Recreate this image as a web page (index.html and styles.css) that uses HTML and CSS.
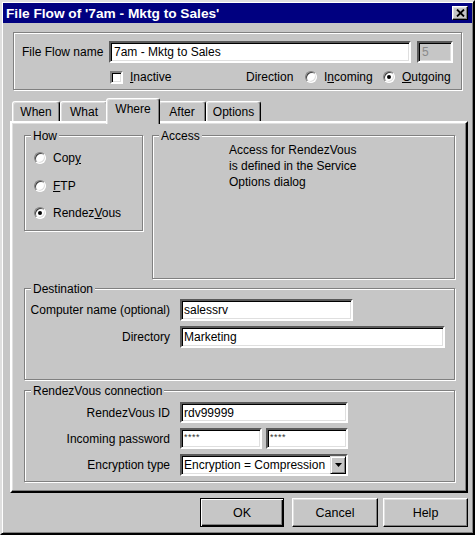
FILE: index.html
```html
<!DOCTYPE html>
<html>
<head>
<meta charset="utf-8">
<title>File Flow</title>
<link rel="stylesheet" href="styles.css">
</head>
<body>
<div class="window">
  <div class="titlebar">
    <span class="title">File Flow of '7am - Mktg to Sales'</span>
    <span class="close-btn"><svg width="9" height="8" viewBox="0 0 9 8"><path d="M1 0.5 L8 7.5 M8 0.5 L1 7.5" stroke="#000" stroke-width="1.8" fill="none"/></svg></span>
  </div>
  <div class="client">
    <div class="group top-group">
      <div class="row1">
        <span class="lbl-name">File Flow name</span>
        <div class="field name-field">7am - Mktg to Sales</div>
        <div class="field num-field">5</div>
      </div>
      <div class="row2">
        <div class="chk-wrap"><span class="checkbox"></span><span class="chk-label"><u>I</u>nactive</span></div>
        <span class="dir-label">Direction</span>
        <span class="radio"></span><span class="radio-text w-in">I<u>n</u>coming</span>
        <span class="radio checked"></span><span class="radio-text"><u>O</u>utgoing</span>
      </div>
    </div>

    <div class="tabs">
      <div class="tab t-when">When</div>
      <div class="tab t-what">What</div>
      <div class="tab t-where active">Where</div>
      <div class="tab t-after">After</div>
      <div class="tab t-options">Options</div>
    </div>

    <div class="panel">
      <div class="top-row">
        <div class="group how">
          <span class="caption">How</span>
          <div class="opt"><span class="radio"></span><span class="radio-text">Cop<u>y</u></span></div>
          <div class="opt"><span class="radio"></span><span class="radio-text"><u>F</u>TP</span></div>
          <div class="opt"><span class="radio checked"></span><span class="radio-text">Rendez<u>V</u>ous</span></div>
        </div>
        <div class="group access">
          <span class="caption">Access</span>
          <p class="access-text">Access for RendezVous<br>is defined in the Service<br>Options dialog</p>
        </div>
      </div>

      <div class="group dest">
        <span class="caption">Destination</span>
        <div class="form">
          <span class="flabel">Computer name (optional)</span>
          <div class="field f22 w-comp">salessrv</div>
          <span class="flabel">Directory</span>
          <div class="field f22 w-dir">Marketing</div>
        </div>
      </div>

      <div class="group rdv">
        <span class="caption">RendezVous connection</span>
        <div class="form">
          <span class="flabel">RendezVous ID</span>
          <div class="field f21 w-id">rdv99999</div>
          <span class="flabel">Incoming password</span>
          <div class="pw-pair">
            <div class="field f21 pw">****</div>
            <div class="field f21 pw">****</div>
          </div>
          <span class="flabel">Encryption type</span>
          <div class="field select">
            <span class="sel-text">Encryption = Compression</span>
            <span class="drop-btn"><svg width="7" height="4" viewBox="0 0 7 4"><polygon points="0,0 7,0 3.5,4" fill="#000"/></svg></span>
          </div>
        </div>
      </div>
    </div>

    <div class="buttons">
      <div class="btn default b-ok">OK</div>
      <div class="btn b-cancel">Cancel</div>
      <div class="btn b-help">Help</div>
    </div>
  </div>
</div>
</body>
</html>
```

FILE: styles.css
```css
* { box-sizing: border-box; }
html, body { margin: 0; padding: 0; }
body {
  width: 475px;
  height: 535px;
  overflow: hidden;
  background: #c6c6c6;
  font: 12px "Liberation Sans", Arial, sans-serif;
  color: #000;
}
u { text-decoration: underline; text-underline-offset: 1px; }

.window {
  width: 475px;
  height: 535px;
  background: #c6c6c6;
  border: 2px solid;
  border-color: #dfdfdf #000 #000 #dfdfdf;
  box-shadow: inset 1px 1px 0 #fff, inset -1px -1px 0 #808080;
  padding: 1px;
  display: flex;
  flex-direction: column;
}

.titlebar {
  height: 20px;
  background: #000080;
  display: flex;
  align-items: center;
  justify-content: space-between;
  padding: 0 4px 0 3px;
  flex: none;
}
.title {
  color: #fff;
  font-weight: bold;
  font-size: 13.7px;
  white-space: nowrap;
}
.close-btn {
  width: 16px;
  height: 14px;
  background: #c6c6c6;
  border: 1px solid;
  border-color: #fff #000 #000 #fff;
  box-shadow: inset -1px -1px 0 #808080, inset 1px 1px 0 #dfdfdf;
  display: flex;
  align-items: center;
  justify-content: center;
}
.close-btn svg { display: block; }

.client {
  flex: 1;
  padding: 0 4px 0 7px;
}

/* etched group box */
.group {
  position: relative;
  border: 1px solid #808080;
  box-shadow: inset 1px 1px 0 #fff, 1px 1px 0 #fff;
}
.caption {
  position: absolute;
  top: -7px;
  left: 6px;
  padding: 0 2px;
  background: #c6c6c6;
  line-height: 14px;
  white-space: nowrap;
}

/* sunken fields */
.field {
  background: #fff;
  border: 2px solid;
  border-color: #5a5a5a #fff #fff #5a5a5a;
  box-shadow: inset 1px 1px 0 #000, inset -1px -1px 0 #dfdfdf;
  padding-left: 2px;
  display: flex;
  align-items: center;
  white-space: nowrap;
  overflow: hidden;
}

.top-group {
  margin: 9px 0 0 3px;
  width: 449px;
  height: 58px;
  padding: 8px 0 0 8px;
}
.row1 {
  display: flex;
  align-items: center;
  height: 22px;
}
.lbl-name { width: 87px; }
.name-field { width: 302px; height: 22px; padding-left: 3px; }
.num-field {
  width: 36px;
  height: 22px;
  margin-left: 6px;
  background: #c6c6c6;
  color: #8a8a8a;
  padding-left: 3px;
}
.row2 {
  display: flex;
  align-items: center;
  height: 14px;
  margin-top: 7px;
}
.chk-wrap {
  margin-left: 88px;
  width: 136px;
  display: flex;
  align-items: center;
}
.checkbox {
  width: 13px;
  height: 13px;
  background: #fff;
  border: 2px solid;
  border-color: #808080 #fff #fff #808080;
  box-shadow: inset 1px 1px 0 #000, inset -1px -1px 0 #dfdfdf;
}
.chk-label { margin-left: 7px; }
.dir-label { width: 59px; }

.radio {
  width: 12px;
  height: 12px;
  flex: none;
  border-radius: 50%;
  background: #fff;
  border: 1px solid;
  border-color: #808080 #fff #fff #808080;
  box-shadow: inset 1px 1px 0 #404040, inset -1px -1px 0 #dfdfdf;
  display: flex;
  align-items: center;
  justify-content: center;
}
.radio.checked::after {
  content: "";
  width: 4px;
  height: 4px;
  border-radius: 50%;
  background: #000;
}
.radio-text { margin-left: 7px; white-space: nowrap; }
.w-in { width: 59px; }

/* tabs */
.tabs {
  margin-top: 8px;
  height: 23px;
  display: flex;
  align-items: flex-end;
  padding-left: 2px;
}
.tab {
  height: 20px;
  border: 1px solid;
  border-bottom: 0;
  border-color: #fff #000 transparent #fff;
  box-shadow: inset -1px 0 0 #808080, inset 1px 1px 0 #dfdfdf;
  border-radius: 3px 3px 0 0;
  display: flex;
  align-items: center;
  justify-content: center;
  padding-top: 1px;
  background: #c6c6c6;
}
.t-when { width: 48px; }
.t-what { width: 48px; }
.t-where { width: 50px; }
.t-after { width: 48px; }
.t-options { width: 55px; }
.tab.active {
  height: 26px;
  margin: 0 -2px -3px -2px;
  width: 54px;
  position: relative;
  z-index: 1;
  padding-top: 0;
  padding-bottom: 5px;
}

.panel {
  width: 458px;
  height: 372px;
  border: 2px solid;
  border-color: #fff #000 #000 #fff;
  box-shadow: inset -1px -1px 0 #808080, inset 1px 1px 0 #dfdfdf;
  padding: 12px 0 0 12px;
}
.top-row {
  display: flex;
  align-items: flex-start;
  gap: 9px;
}
.how {
  width: 119px;
  height: 96px;
  padding: 14px 0 0 9px;
  display: flex;
  flex-direction: column;
  gap: 11.5px;
}
.opt {
  display: flex;
  align-items: center;
  height: 16px;
}
.access {
  width: 303px;
  height: 144px;
}
.access-text {
  margin: 0;
  padding: 6px 0 0 76px;
  line-height: 16px;
}

.dest {
  margin-top: 9px;
  width: 431px;
  height: 92px;
}
.rdv {
  margin-top: 10px;
  width: 431px;
  height: 92px;
}
.form {
  display: grid;
  grid-template-columns: 138px auto;
  column-gap: 10px;
  row-gap: 5px;
  align-items: center;
  justify-items: start;
  padding: 10px 0 0 7px;
}
.rdv .form { padding-top: 11px; }
.flabel {
  justify-self: end;
  white-space: nowrap;
}
.f22 { height: 22px; }
.f21 { height: 21px; }
.w-comp { width: 173px; }
.w-dir { width: 265px; }
.w-id { width: 168px; }
.pw-pair {
  display: flex;
  gap: 4px;
}
.pw {
  width: 82px;
  align-items: flex-start;
  padding-top: 2px;
  font-size: 9px;
  color: #333;
  letter-spacing: 0.5px;
}
.select {
  width: 168px;
  height: 22px;
  justify-content: space-between;
  padding-left: 2px;
}
.drop-btn {
  width: 16px;
  height: 18px;
  background: #c6c6c6;
  border: 1px solid;
  border-color: #dfdfdf #000 #000 #dfdfdf;
  box-shadow: inset 1px 1px 0 #fff, inset -1px -1px 0 #808080;
  display: flex;
  align-items: center;
  justify-content: center;
  flex: none;
}
.drop-btn svg { display: block; }

.buttons {
  margin-top: 5px;
  display: flex;
  justify-content: flex-end;
}
.btn {
  height: 29px;
  border: 1px solid;
  border-color: #fff #000 #000 #fff;
  box-shadow: inset -1px -1px 0 #808080, inset 1px 1px 0 #dfdfdf;
  display: flex;
  align-items: center;
  justify-content: center;
  font-size: 12.5px;
}
.btn.default {
  border-color: #000;
  box-shadow: inset 1px 1px 0 #fff, inset -1px -1px 0 #000, inset -2px -2px 0 #808080;
}
.b-ok { width: 84px; margin-right: 8px; }
.b-cancel { width: 86px; margin-right: 5px; }
.b-help { width: 85px; }
```
